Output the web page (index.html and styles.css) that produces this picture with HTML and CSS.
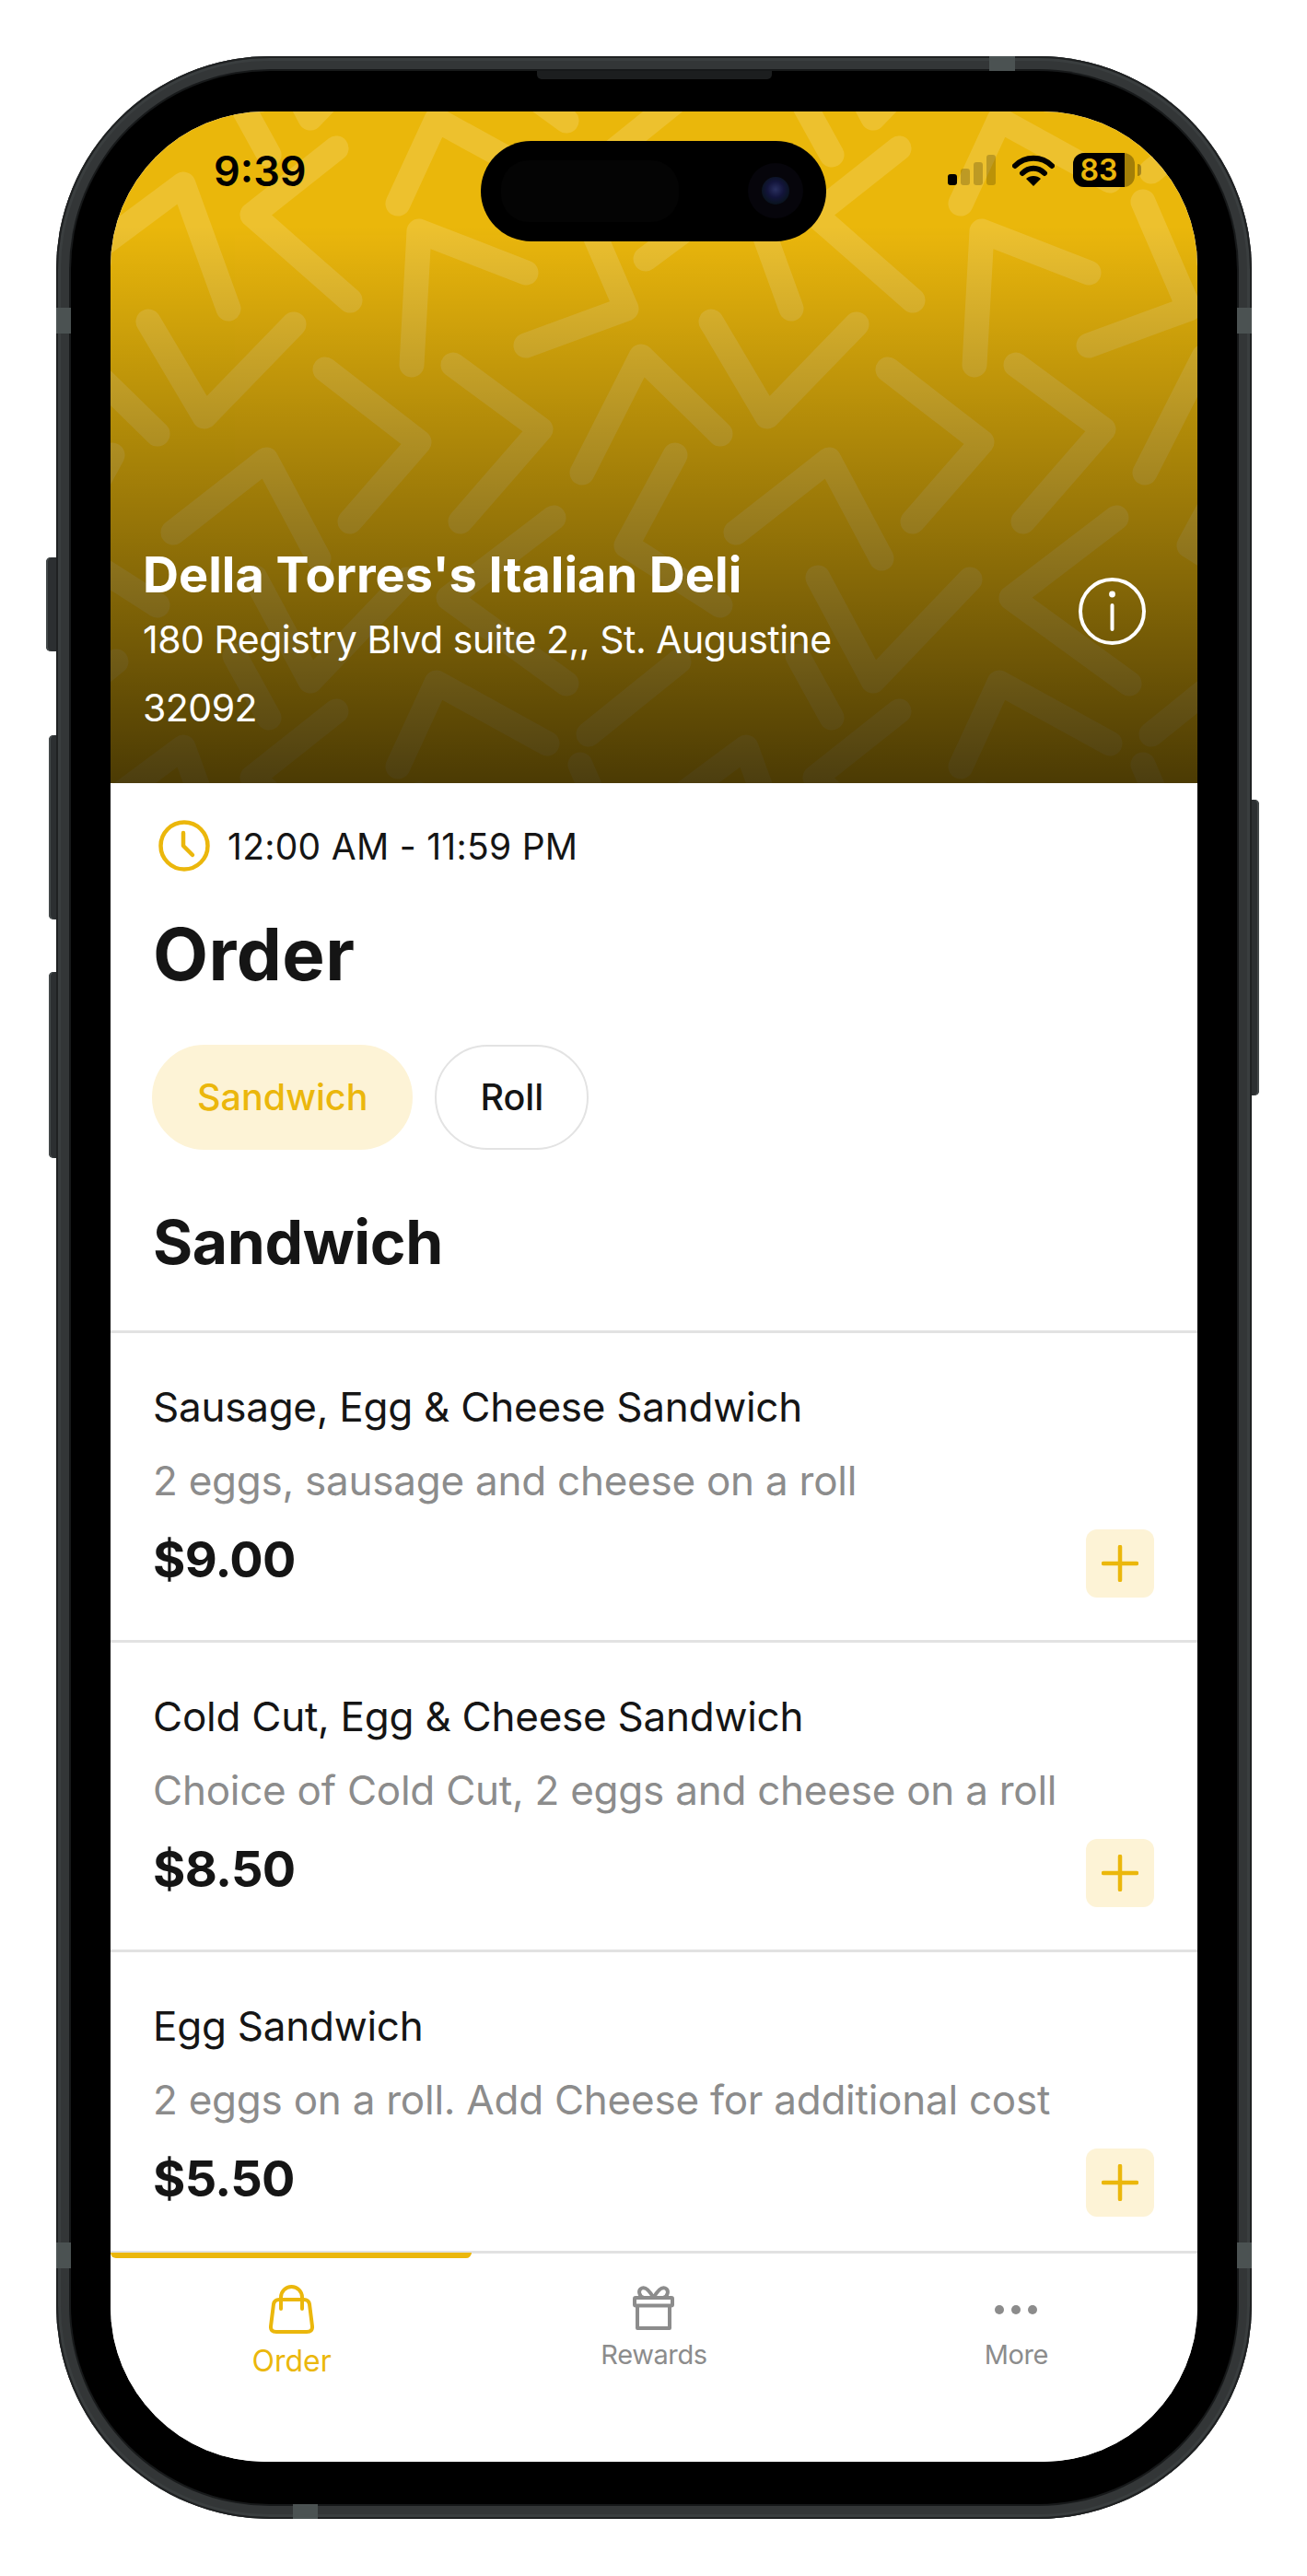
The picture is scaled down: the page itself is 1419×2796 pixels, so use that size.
FILE: index.html
```html
<!DOCTYPE html>
<html lang="en">
<head>
  <meta charset="UTF-8">
  <meta name="viewport" content="width=device-width, initial-scale=1.0">
  <title>Della Torres's Italian Deli</title>
  <link rel="stylesheet" href="styles.css">
</head>
<body>
  <div class="phone">
    <span class="side-btn action"></span>
    <span class="side-btn vol-up"></span>
    <span class="side-btn vol-down"></span>
    <span class="side-btn power"></span>
    <span class="band band-top"></span>
    <span class="band band-left"></span>
    <span class="band band-right"></span>
    <span class="band band-left-low"></span>
    <span class="band band-right-low"></span>
    <span class="band band-bottom"></span>
    <span class="speaker"></span>

    <div class="bezel">
      <div class="screen">
        <div class="island">
          <span class="island-sensor"></span>
          <span class="camera"><span class="lens"></span></span>
        </div>

        <header class="hero">
          <svg class="hero-pattern" width="1180" height="729" viewBox="0 0 1180 729">
            <defs>
              <g id="tile">
                <polyline points="312,100 354,9 474,75"/>
                <polyline points="245,40 154,112 260,205"/>
                <polyline points="-30,160 79,79 128,214"/>
                <polyline points="327,275 335,130 451,175"/>
                <polyline points="510,98 560,214 451,254"/>
                <polyline points="41,228 102,331 199,231"/>
                <polyline points="233,280 335,359 260,445"/>
                <polyline points="372,275 467,345 380,445"/>
                <polyline points="512,392 576,266 662,350"/>
                <polyline points="68,457 169,378 226,485"/>
                <polyline points="613,373 560,471 662,536"/>
                <polyline points="481,441 367,528 495,621"/>
                <polyline points="157,506 217,618 322,508"/>
                <polyline points="135,-20 172,47"/>
                <polyline points="519,65 617,-14"/>
              </g>
            </defs>
            <g class="chevrons">
              <use href="#tile"/>
              <use href="#tile" x="611"/>
              <use href="#tile" x="-611"/>
              <use href="#tile" y="611"/>
              <use href="#tile" x="611" y="611"/>
              <use href="#tile" x="-611" y="611"/>
              <use href="#tile" y="-611"/>
              <use href="#tile" x="611" y="-611"/>
              <use href="#tile" x="-611" y="-611"/>
            </g>
          </svg>
          <div class="hero-shade"></div>

          <div class="status">
            <span class="time">9:39</span>
            <div class="status-icons">
              <div class="signal">
                <i class="on s1"></i><i class="s2"></i><i class="s3"></i><i class="s4"></i>
              </div>
              <svg class="wifi" width="46" height="34" viewBox="0 0 46 34">
                <path d="M3 12C14 1 32 1 43 12M11 20C18 13 28 13 35 20" fill="none" stroke="#000" stroke-width="6" stroke-linecap="round"/>
                <path d="M23 34L15 26C19 22 27 22 31 26Z" fill="#000"/>
              </svg>
              <div class="battery">
                <div class="battery-body">
                  <span class="battery-fill">83</span>
                </div>
                <span class="battery-tip"></span>
              </div>
            </div>
          </div>

          <div class="hero-row">
            <div class="hero-text">
              <h2 class="store-name">Della Torres's Italian Deli</h2>
              <p class="store-address">180 Registry Blvd suite 2,, St. Augustine 32092</p>
            </div>
            <svg class="info" width="73" height="73" viewBox="0 0 73 73">
              <circle cx="36.5" cy="36.5" r="34.5" fill="none" stroke="#fff" stroke-width="4"/>
              <circle cx="36.5" cy="18" r="3.4" fill="#fff"/>
              <line x1="36.5" y1="30" x2="36.5" y2="56" stroke="#fff" stroke-width="4" stroke-linecap="round"/>
            </svg>
          </div>
        </header>

        <main class="content">
          <div class="hours">
            <svg width="56" height="56" viewBox="0 0 56 56">
              <circle cx="28" cy="28" r="25.5" fill="none" stroke="#ebb70c" stroke-width="4.5"/>
              <path d="M27 14V28L37 38" fill="none" stroke="#ebb70c" stroke-width="4.5" stroke-linecap="round" stroke-linejoin="round"/>
            </svg>
            <span>12:00 AM - 11:59 PM</span>
          </div>

          <h1 class="page-title">Order</h1>

          <div class="pills">
            <span class="pill active">Sandwich</span>
            <span class="pill">Roll</span>
          </div>

          <h2 class="section-title">Sandwich</h2>

          <div class="menu">
            <div class="item">
              <div class="item-name">Sausage, Egg &amp; Cheese Sandwich</div>
              <div class="item-desc">2 eggs, sausage and cheese on a roll</div>
              <div class="item-foot">
                <span class="price">$9.00</span>
                <span class="add"><svg width="40" height="40" viewBox="0 0 40 40"><path d="M20 2V38M2 20H38" stroke="#ebb70c" stroke-width="4.5" stroke-linecap="round"/></svg></span>
              </div>
            </div>
            <div class="item">
              <div class="item-name">Cold Cut, Egg &amp; Cheese Sandwich</div>
              <div class="item-desc">Choice of Cold Cut, 2 eggs and cheese on a roll</div>
              <div class="item-foot">
                <span class="price">$8.50</span>
                <span class="add"><svg width="40" height="40" viewBox="0 0 40 40"><path d="M20 2V38M2 20H38" stroke="#ebb70c" stroke-width="4.5" stroke-linecap="round"/></svg></span>
              </div>
            </div>
            <div class="item">
              <div class="item-name">Egg Sandwich</div>
              <div class="item-desc">2 eggs on a roll. Add Cheese for additional cost</div>
              <div class="item-foot">
                <span class="price">$5.50</span>
                <span class="add"><svg width="40" height="40" viewBox="0 0 40 40"><path d="M20 2V38M2 20H38" stroke="#ebb70c" stroke-width="4.5" stroke-linecap="round"/></svg></span>
              </div>
            </div>
          </div>
        </main>

        <nav class="tabbar">
          <span class="tab-indicator"></span>
          <a class="tab active">
            <svg width="49" height="53" viewBox="0 0 49 53" fill="none" stroke="#ebb70c" stroke-width="4" stroke-linecap="round" stroke-linejoin="round">
              <path d="M11 16H38Q43 16 44 21L47 45Q47.5 51 41 51H8Q1.5 51 2 45L5 21Q6 16 11 16Z"/>
              <path d="M13 26V13.5A11.5 11.5 0 0 1 36 13.5V26"/>
            </svg>
            <span>Order</span>
          </a>
          <a class="tab">
            <svg width="45" height="48" viewBox="0 0 45 48" fill="none" stroke="#8c8c8c" stroke-width="4" stroke-linejoin="round">
              <rect x="2" y="13" width="41" height="8.5" rx="1"/>
              <path d="M5 21.5V46H40V21.5"/>
              <path d="M22.5 13C18 5 14 1 10 2.5C5 4.5 7 12 12 13M22.5 13C27 5 31 1 35 2.5C40 4.5 38 12 33 13"/>
            </svg>
            <span>Rewards</span>
          </a>
          <a class="tab">
            <svg width="46" height="48" viewBox="0 0 46 48" fill="#8c8c8c">
              <circle cx="5" cy="26" r="5"/>
              <circle cx="23" cy="26" r="5"/>
              <circle cx="41" cy="26" r="5"/>
            </svg>
            <span>More</span>
          </a>
        </nav>
      </div>
    </div>
  </div>
</body>
</html>
```

FILE: styles.css
```css
* {
  box-sizing: border-box;
}
body {
  margin: 0;
  padding: 61px 60px 62px 61px;
  background: #fff;
  font-family: Inter, "Noto Sans", sans-serif;
  color: #151515;
}
h1, h2, p {
  margin: 0;
}

/* device frame */
.phone {
  position: relative;
  width: 1298px;
  height: 2673px;
  padding: 16px;
  border-radius: 232px;
  background: #333637;
  box-shadow: inset 0 0 0 2px #1f2122, inset 0 0 0 5px #3a3e3f;
}
.bezel {
  width: 100%;
  height: 100%;
  padding: 44px 43px 45px;
  border-radius: 216px;
  background: #000;
  box-shadow: 0 0 0 2px #17191a;
}
.screen {
  position: relative;
  display: flex;
  flex-direction: column;
  width: 1180px;
  height: 2551px;
  overflow: hidden;
  border-radius: 168px;
  background: #fff;
}
.side-btn {
  position: absolute;
  background: #2c2f31;
  border-radius: 5px 0 0 5px;
  box-shadow: inset 2px 0 0 #44494a;
}
.action { left: -11px; top: 544px; width: 11px; height: 102px; }
.vol-up { left: -8px; top: 737px; width: 8px; height: 200px; }
.vol-down { left: -8px; top: 994px; width: 8px; height: 202px; }
.power {
  right: -8px;
  top: 807px;
  width: 8px;
  height: 321px;
  border-radius: 0 5px 5px 0;
  box-shadow: inset -2px 0 0 #44494a;
}
.band {
  position: absolute;
  background: #4b5252;
}
.band-top { left: 1013px; top: 0; width: 28px; height: 16px; }
.band-bottom { left: 257px; bottom: 0; width: 27px; height: 16px; }
.band-left { left: 0; top: 273px; width: 16px; height: 28px; }
.band-right { right: 0; top: 273px; width: 16px; height: 28px; }
.band-left-low { left: 0; top: 2373px; width: 16px; height: 28px; }
.band-right-low { right: 0; top: 2373px; width: 16px; height: 28px; }
.speaker {
  position: absolute;
  left: 522px;
  top: 16px;
  width: 255px;
  height: 9px;
  border-radius: 0 0 5px 5px;
  background: #1c1e1f;
  z-index: 1;
}

/* dynamic island */
.island {
  position: absolute;
  left: 402px;
  top: 32px;
  width: 375px;
  height: 109px;
  border-radius: 55px;
  background: #000;
  z-index: 3;
}
.island-sensor {
  position: absolute;
  left: 22px;
  top: 21px;
  width: 193px;
  height: 67px;
  border-radius: 30px;
  background: #040404;
}
.camera {
  position: absolute;
  left: 290px;
  top: 24px;
  width: 60px;
  height: 60px;
  border-radius: 50%;
  background: #06050b;
}
.lens {
  position: absolute;
  left: 15px;
  top: 15px;
  width: 30px;
  height: 30px;
  border-radius: 50%;
  background: radial-gradient(circle at 50% 45%, #2a3060 0, #12143a 40%, #0a1420 70%, #04040c 100%);
}

/* hero */
.hero {
  position: relative;
  display: flex;
  flex-direction: column;
  flex: none;
  height: 729px;
  color: #fff;
  background: #ebb70c;
}
.hero-pattern {
  position: absolute;
  left: 0;
  top: 0;
}
.chevrons {
  opacity: 0.14;
  fill: none;
  stroke: #fff;
  stroke-width: 27px;
  stroke-linecap: round;
  stroke-linejoin: round;
}
.hero-shade {
  position: absolute;
  inset: 0;
  background: linear-gradient(180deg, rgba(0, 0, 0, 0) 17%, rgba(0, 0, 0, 0.68) 100%);
}
.status {
  position: relative;
  display: flex;
  justify-content: space-between;
  align-items: center;
  padding: 38px 61px 0 112px;
  color: #000;
}
.time {
  font-size: 45px;
  line-height: 54px;
  font-weight: 600;
}
.status-icons {
  display: flex;
  align-items: center;
  margin-top: -3px;
}
.signal {
  display: flex;
  align-items: flex-end;
  gap: 4px;
  height: 33px;
  margin-right: 18px;
}
.signal i {
  width: 10px;
  border-radius: 3px;
  background: rgba(0, 0, 0, 0.2);
}
.signal .on { background: #000; }
.s1 { height: 12px; }
.s2 { height: 18px; }
.s3 { height: 25px; }
.s4 { height: 33px; }
.wifi {
  margin-right: 20px;
}
.battery {
  display: flex;
  align-items: center;
  gap: 3px;
}
.battery-body {
  width: 67px;
  height: 37px;
  border-radius: 12px;
  background: rgba(0, 0, 0, 0.3);
}
.battery-fill {
  display: block;
  width: 56px;
  height: 37px;
  border-radius: 12px 0 0 12px;
  text-align: center;
  font-size: 32px;
  line-height: 37px;
  font-weight: 600;
  color: #ebb70c;
  background: #000;
}
.battery-tip {
  width: 4px;
  height: 13px;
  border-radius: 0 4px 4px 0;
  background: rgba(0, 0, 0, 0.3);
}
.hero-row {
  position: relative;
  display: flex;
  justify-content: space-between;
  align-items: flex-start;
  margin-top: auto;
  padding: 0 56px 45px 35px;
}
.store-name {
  font-size: 54px;
  line-height: 66px;
  font-weight: 700;
}
.store-address {
  max-width: 790px;
  font-size: 41px;
  line-height: 74px;
  letter-spacing: -0.5px;
}
.info {
  margin-top: 36px;
}

/* page content */
.content {
  flex: 1;
  min-height: 0;
  overflow: hidden;
  padding-top: 40px;
}
.hours {
  display: flex;
  align-items: center;
  gap: 19px;
  margin-left: 52px;
  font-size: 39px;
  line-height: 55px;
  letter-spacing: 0.28px;
}
.page-title {
  margin: 45px 0 0 46px;
  font-size: 78px;
  line-height: 90px;
  font-weight: 700;
  letter-spacing: 0.4px;
}
.pills {
  display: flex;
  gap: 24px;
  margin: 53px 0 0 45px;
}
.pill {
  height: 114px;
  padding: 0 47px;
  border: 2px solid #e3e3e3;
  border-radius: 57px;
  font-size: 39.5px;
  line-height: 110px;
  font-weight: 500;
}
.pill.active {
  border-color: #fdf3d6;
  background: #fdf3d6;
  color: #ebb70c;
}
.section-title {
  margin: 60px 0 0 46px;
  font-size: 66px;
  line-height: 80px;
  font-weight: 700;
  letter-spacing: -0.4px;
}
.menu {
  margin-top: 56px;
}
.item {
  padding: 50px 47px 46px 46px;
  border-top: 3px solid #e2e2e2;
}
.item-name,
.item-desc {
  font-size: 44px;
  line-height: 60px;
  letter-spacing: -0.25px;
}
.item-desc {
  margin-top: 20px;
  color: #8c8c8c;
}
.item-foot {
  display: flex;
  justify-content: space-between;
  align-items: flex-start;
  margin-top: 23px;
}
.price {
  font-size: 54px;
  line-height: 65px;
  font-weight: 700;
  letter-spacing: -0.7px;
}
.add {
  display: flex;
  justify-content: center;
  align-items: center;
  width: 74px;
  height: 74px;
  border-radius: 12px;
  background: #fdf3d6;
}

/* tab bar */
.tabbar {
  position: relative;
  display: flex;
  flex: none;
  height: 229px;
  border-top: 3px solid #e2e2e2;
  background: #fff;
}
.tab-indicator {
  position: absolute;
  left: 0;
  top: -1px;
  width: 392px;
  height: 6px;
  border-radius: 0 0 6px 6px;
  background: #ebb70c;
}
.tab {
  display: flex;
  flex: 1;
  flex-direction: column;
  align-items: center;
  padding-top: 35px;
  font-size: 29px;
  line-height: 36px;
  letter-spacing: -0.4px;
  color: #8c8c8c;
}
.tab span {
  margin-top: 9px;
}
.tab.active {
  padding-top: 34px;
  font-size: 32px;
  letter-spacing: 0;
  color: #ebb70c;
}
.tab.active span {
  margin-top: 12px;
}
```
